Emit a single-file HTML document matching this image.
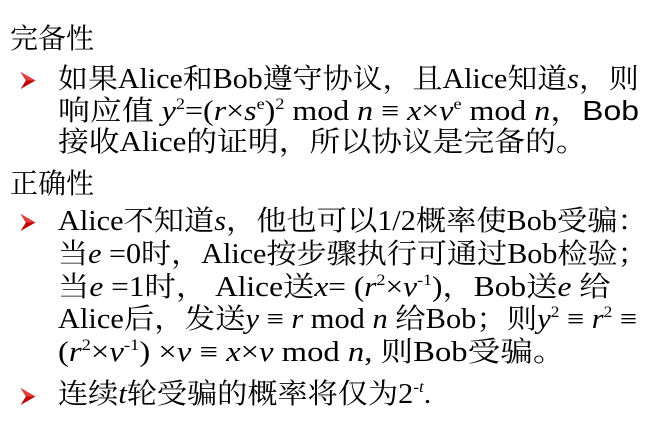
<!DOCTYPE html>
<html><head><meta charset="utf-8"><style>
body{margin:0;width:667px;height:422px;background:#fff;position:relative;overflow:hidden;font-family:"Liberation Serif","Noto Serif CJK SC",serif;color:#000}
.l{position:absolute;white-space:nowrap;font-size:28px;line-height:32px;left:58px;transform-origin:0 50%}
.h{position:absolute;left:10px;font-size:28px;line-height:32px;white-space:nowrap}
i{font-style:italic}
sup{font-size:16px;vertical-align:11px;line-height:0}
.b{position:absolute;left:20px;width:16px;height:17px}
.s{font-family:"Liberation Sans","Noto Sans CJK SC",sans-serif}
</style></head><body>
<div class="h" style="top:24px">完备性</div>
<svg class="b" style="top:72px" viewBox="0 0 14 16"><path d="M0 0 L14 8 L0 16 L5 8 Z" fill="#c00000"/><path d="M0 0 L14 8 L5 8 Z" fill="#e04040"/></svg>
<div class="l" style="top:64px;transform:scaleX(1.07)">如果Alice和Bob遵守协议，且Alice知道<i>s</i>，则</div>
<div class="l" style="top:95px;transform:scaleX(1.14)">响应值 <i>y</i><sup>2</sup>=(<i>r</i>×<i>s</i><sup>e</sup>)<sup>2</sup> mod <i>n</i> ≡ <i>x</i>×<i>v</i><sup>e</sup> mod <i>n</i>，<span class="s">Bob</span></div>
<div class="l" style="top:127px;transform:scaleX(1.1)">接收Alice的证明，所以协议是完备的。</div>
<div class="h" style="top:169px">正确性</div>
<svg class="b" style="top:214px" viewBox="0 0 14 16"><path d="M0 0 L14 8 L0 16 L5 8 Z" fill="#c00000"/><path d="M0 0 L14 8 L5 8 Z" fill="#e04040"/></svg>
<div class="l" style="top:206px;transform:scaleX(1.08)">Alice不知道<i>s</i>，他也可以1/2概率使Bob受骗：</div>
<div class="l" style="top:239px;transform:scaleX(1.075)">当<i>e</i> =0时，Alice按步骤执行可通过Bob检验；</div>
<div class="l" style="top:272px;transform:scaleX(1.12)">当<i>e</i> =1时， Alice送<i>x</i>= (<i>r</i><sup>2</sup>×<i>v</i><sup>-1</sup>)，Bob送<i>e</i> 给</div>
<div class="l" style="top:304px;transform:scaleX(1.086)">Alice后，发送<i>y</i> ≡ <i>r</i> mod <i>n</i> 给Bob；则<i>y</i><sup>2</sup> ≡ <i>r</i><sup>2</sup> ≡</div>
<div class="l" style="top:337px;transform:scaleX(1.166)">(<i>r</i><sup>2</sup>×<i>v</i><sup>-1</sup>) ×<i>v</i> ≡ <i>x</i>×<i>v</i> mod <i>n</i>, 则Bob受骗。</div>
<svg class="b" style="top:388px" viewBox="0 0 14 16"><path d="M0 0 L14 8 L0 16 L5 8 Z" fill="#c00000"/><path d="M0 0 L14 8 L5 8 Z" fill="#e04040"/></svg>
<div class="l" style="top:379px;transform:scaleX(1.077)">连续<i>t</i>轮受骗的概率将仅为2<sup>-<i>t</i></sup>.</div>
</body></html>
